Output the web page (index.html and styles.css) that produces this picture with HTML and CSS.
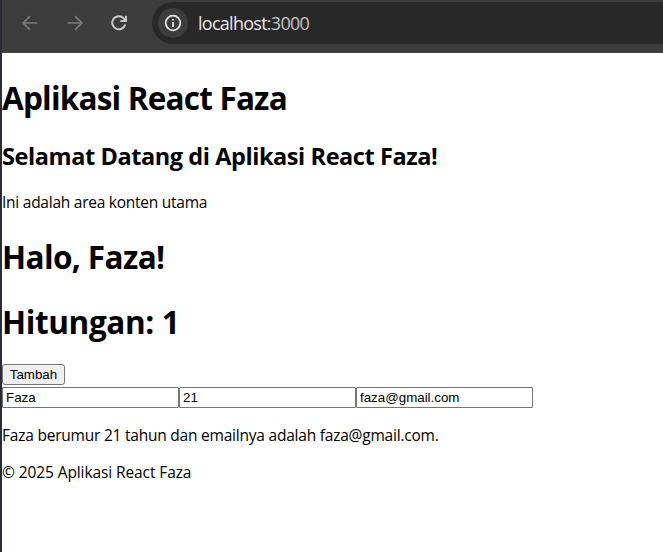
FILE: index.html
```html
<!DOCTYPE html>
<html lang="id">
<head>
<meta charset="utf-8">
<title>Aplikasi React Faza</title>
<link rel="stylesheet" href="styles.css">
</head>
<body>
<div class="window">
  <div class="toolbar">
    <svg class="nav" viewBox="0 0 16 16"><path d="M15.3 8H1.5M8 1.2L1.2 8L8 14.8"/></svg>
    <svg class="nav" viewBox="0 0 16 16"><path d="M.7 8H14.5M8 1.2L14.8 8L8 14.8"/></svg>
    <svg class="nav reload" viewBox="0 0 16 16"><path d="M14.2 9.4A6.6 6.6 0 1 1 12.7 3.3L14.8 5.6"/><path d="M15 .7V6.1H9.4"/></svg>
    <div class="address">
      <span class="info"><svg viewBox="0 0 18 18"><circle cx="9" cy="9" r="7.3"/><path d="M9 8.1V13M9 4.9V6.6"/></svg></span>
      <span class="url">localhost<span class="port">:3000</span></span>
    </div>
  </div>
  <main class="page">
    <h1 class="app-title">Aplikasi React Faza</h1>
    <h2>Selamat Datang di Aplikasi React Faza!</h2>
    <p class="intro">Ini adalah area konten utama</p>
    <h1 class="greeting">Halo, Faza!</h1>
    <h1 class="counter">Hitungan: 1</h1>
    <button type="button">Tambah</button>
    <div class="fields">
      <input type="text" value="Faza"><input type="text" value="21"><input type="text" value="faza@gmail.com">
    </div>
    <p class="summary">Faza berumur 21 tahun dan emailnya adalah faza@gmail.com.</p>
    <p class="footer">© 2025 Aplikasi React Faza</p>
  </main>
</div>
</body>
</html>
```

FILE: styles.css
```css
* { box-sizing: border-box; }
body { margin: 0; background: #fff; color: #000; font-family: "Open Sans", sans-serif; font-size: 15.5px; overflow: hidden; }
.window { height: 552px; border-left: 2px solid #292d35; }
.toolbar { height: 53px; background: #3c3c3c; border-bottom: 1px solid #494747; display: flex; align-items: flex-start; }
.nav { flex: none; width: 16px; height: 16px; margin: 15px 0 0 20px; fill: none; stroke: #7b7b7b; stroke-width: 1.7; }
.nav + .nav { margin-left: 28.5px; }
.nav.reload { stroke: #c9c9c9; stroke-width: 2; }
.address { flex: 1; height: 42px; margin: 2px 0 0 25px; background: #282828; border-radius: 21px 0 0 21px; display: flex; align-items: center; padding-left: 6px; }
.info { width: 30px; height: 30px; border-radius: 50%; background: #3c3c3c; display: flex; align-items: center; justify-content: center; }
.info svg { width: 18px; height: 18px; fill: none; stroke: #e3e3e3; stroke-width: 1.8; }
.url { margin-left: 10px; color: #e8e8e8; font-size: 18px; line-height: 24px; letter-spacing: -.73px; white-space: nowrap; }
.port { color: #c4c4c4; }
.page { display: flex; flex-direction: column; align-items: flex-start; white-space: nowrap; }
h1, h2, p { margin: 0; }
h1 { margin-top: 22px; font-size: 31.5px; line-height: 43px; font-weight: 700; }
h2 { margin-top: 21px; font-size: 23.5px; line-height: 32px; font-weight: 700; letter-spacing: -.42px; }
p { line-height: 21px; letter-spacing: -.22px; }
.app-title { margin-top: 23px; letter-spacing: -.8px; }
.intro { margin-top: 20px; letter-spacing: -.25px; }
.greeting { letter-spacing: -.6px; }
.counter { letter-spacing: -.38px; }
button { margin: 21px 0 2px; width: 63px; height: 21px; padding: 0; border: 1px solid #767676; border-radius: 3px; background: #efefef; color: #000; font: 13.333px "Liberation Sans", Arial, sans-serif; }
.fields { display: flex; }
input { width: 177px; height: 21px; margin: 0; padding: 1px 3px; border: 1px solid #767676; border-radius: 1px; background: #fff; color: #000; font: 13.333px "Liberation Sans", Arial, sans-serif; }
.summary { margin-top: 17px; }
.footer { margin-top: 16px; letter-spacing: -.1px; }
```
